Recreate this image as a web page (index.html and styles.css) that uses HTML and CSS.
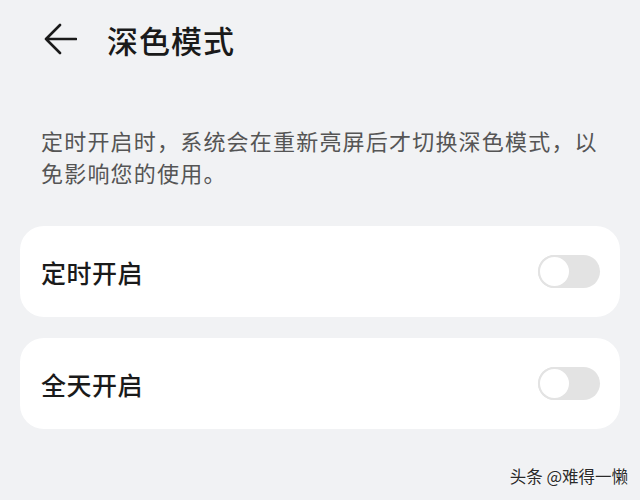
FILE: index.html
```html
<!DOCTYPE html>
<html lang="zh-CN">
<head>
    <meta charset="UTF-8">
    <meta name="viewport" content="width=device-width, initial-scale=1.0">
    <title>深色模式</title>
    <link rel="stylesheet" href="styles.css">
</head>
<body>
    <main class="page">
        <!-- Horní lišta -->
        <header class="topbar">
            <svg class="back" width="34" height="32" viewBox="0 0 34 32">
                <path d="M17 2 L3 16 L17 30 M3 16 H33" fill="none" stroke="#1a1a1a" stroke-width="2.6" stroke-linecap="round" stroke-linejoin="round"/>
            </svg>
            <h1 class="title">深色模式</h1>
        </header>

        <p class="desc">定时开启时，系统会在重新亮屏后才切换深色模式，以免影响您的使用。</p>

        <div class="card">
            <span class="label">定时开启</span>
            <span class="switch"><span class="knob"></span></span>
        </div>

        <div class="card">
            <span class="label">全天开启</span>
            <span class="switch"><span class="knob"></span></span>
        </div>

        <div class="mark">头条 @难得一懒</div>
    </main>
</body>
</html>
```

FILE: styles.css
```css
* {
    margin: 0;
    padding: 0;
    box-sizing: border-box;
}

body {
    font-family: "Noto Sans CJK SC", "Noto Sans", sans-serif;
    background-color: #f1f2f4;
    color: #1a1a1a;
    width: 640px;
    height: 500px;
    overflow: hidden;
}

.page {
    padding: 0 20px;
    position: relative;
    height: 500px;
}

/* Horní lišta */
.topbar {
    display: flex;
    align-items: center;
    height: 78px;
    padding-left: 23px;
}

.back {
    margin-right: 30px;
}

.title {
    font-size: 31px;
    font-weight: 500;
    letter-spacing: 1px;
}

/* Popis */
.desc {
    font-size: 22px;
    line-height: 32px;
    letter-spacing: 1.2px;
    color: #555;
    padding: 46px 4px 0 21px;
    height: 148px;
    word-break: break-all;
}

/* Karty */
.card {
    display: flex;
    align-items: center;
    justify-content: space-between;
    background-color: #fff;
    border-radius: 24px;
    height: 91px;
    padding: 0 20px 0 21px;
    margin-bottom: 21px;
}

.label {
    font-size: 25px;
    font-weight: 500;
    letter-spacing: 0.5px;
}

/* Přepínač */
.switch {
    width: 62px;
    height: 33px;
    border-radius: 17px;
    background-color: #e3e3e3;
    display: flex;
    align-items: center;
}

.knob {
    width: 33px;
    height: 33px;
    border-radius: 50%;
    background-color: #fff;
    border: 2px solid #e3e3e3;
}

/* Vodoznak */
.mark {
    position: absolute;
    right: 12px;
    bottom: 12px;
    font-size: 16.5px;
    color: #2a2a2a;
    text-shadow: 0 0 2px #fff;
}
```
